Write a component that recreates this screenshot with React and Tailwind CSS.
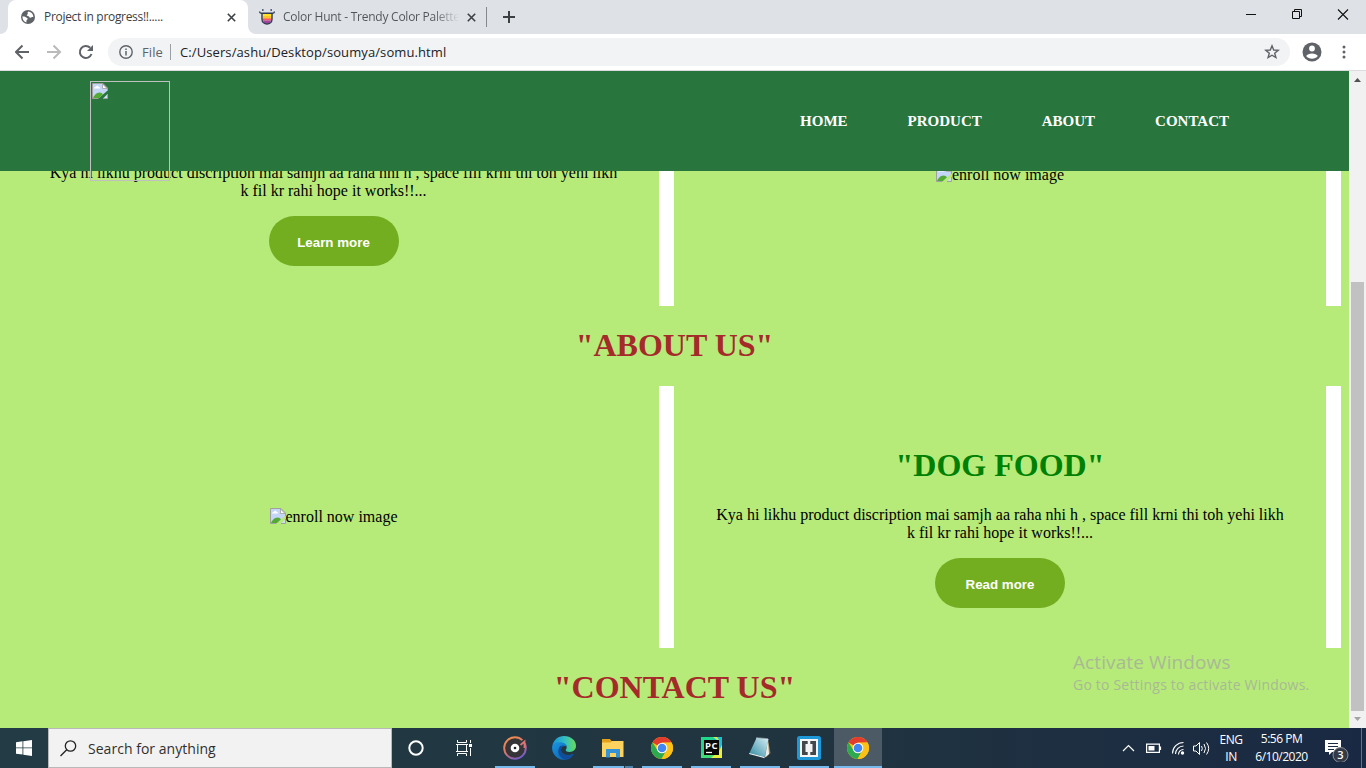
import React from "react";

const UI = "font-['Open_Sans','Noto_Sans',sans-serif]";

function GlobeIcon() {
  return (
    <svg width="14" height="14" viewBox="0 0 14 14" className="shrink-0">
      <circle cx="7" cy="7" r="7" fill="#5f6368" />
      <path d="M7.600 1.500c-1 .5-1.400 1.300-.8 2 .4.600-.4 1-.9 1.300-.5.500.1 1.200.9 1.200 1.100 0 1.300.8 1.900 1.400.5.500 1.600.2 2.300-.3l1.400-.2c-.1-2.700-2-4.900-4.800-5.400ZM1.400 6.300c1.200.2 2.500.3 3.400.9.800.600 1.800.7 1.900 1.500 0 1-1.300 1-1.300 2v1.700C3.200 12 1.300 9.600 1.400 6.300Z" fill="#fff" />
    </svg>
  );
}

function ColorHuntIcon() {
  return (
    <svg width="16" height="16" viewBox="0 0 16 16" className="shrink-0">
      <path d="M3.500 4h9v3h-9z" fill="#ffe227" />
      <path d="M3.500 7h9v3h-9z" fill="#fdc22b" />
      <path d="M3.500 9.500h9v2h-9z" fill="#f4586a" />
      <path d="M3.800 11.500h8.400L10.500 14.500h-5z" fill="#a2439b" />
      <path d="M.5 2.500q.3 1.800 2 1.800h11q1.700 0 2-1.800M3 4.300v6c0 6.200 10 6.200 10 0v-6" fill="none" stroke="#303a52" strokeWidth="1.400" />
      <path d="M3 1h1.600M11.400 1H13" stroke="#303a52" strokeWidth="1.400" />
    </svg>
  );
}

function Cross() {
  return (
    <svg width="9" height="9" viewBox="0 0 9 9" className="shrink-0">
      <path d="m.8.8 7.400 7.400M8.200.8.800 8.200" stroke="#3c4043" strokeWidth="1.600" />
    </svg>
  );
}

function TabStrip() {
  return (
    <div className={`flex h-[34px] bg-[#dee1e6] pl-2 ${UI} text-[12px] leading-[34px]`}>
      <div className="relative flex w-[240px] items-center rounded-t-lg bg-white pl-[13px]">
        <svg width="8" height="8" className="absolute bottom-0 -left-2"><path d="M8 0v8H0a8 8 0 0 0 8-8Z" fill="#fff" /></svg>
        <svg width="8" height="8" className="absolute -right-2 bottom-0"><path d="M0 0v8h8a8 8 0 0 1-8-8Z" fill="#fff" /></svg>
        <GlobeIcon />
        <span className="ml-[9px] w-[183px] whitespace-nowrap text-[#3c4043] tracking-[-0.31px]">Project in progress!!.....</span>
        <Cross />
      </div>
      <div className="flex w-[238px] items-center pl-[11px]">
        <ColorHuntIcon />
        <span className="ml-2 w-[176px] whitespace-nowrap bg-gradient-to-r from-[#505357] from-85% to-[#dee1e6] bg-clip-text text-transparent tracking-[-0.25px]">Color Hunt - Trendy Color Palette</span>
        <span className="ml-[7.500px] flex"><Cross /></span>
      </div>
      <div className="mt-[7px] h-5 w-px bg-[#85888d]" />
      <svg width="14" height="14" viewBox="0 0 14 14" className="mt-[10px] ml-[15px]">
        <path d="M7 1v12M1 7h12" stroke="#3c4043" strokeWidth="2" />
      </svg>
      <div className="ml-auto flex items-center pr-[17px]">
        <svg width="103" height="12" viewBox="0 0 103 12" fill="none" stroke="#111" className="-mt-[6px]">
          <path d="M0 6.500h10" />
          <path d="M46.500 3.500h7v7h-7zM48.500 3V1.500h7v7H54" />
          <path d="m92 1.500 10 10m0-10-10 10" strokeWidth="1.100" />
        </svg>
      </div>
    </div>
  );
}

function Toolbar() {
  return (
    <div className={`flex h-[37px] items-start border-b border-[#dadce0] bg-white pt-1 pr-[15px] pl-[15px] ${UI}`}>
      <svg width="80" height="28" viewBox="0 0 80 28" fill="none" strokeWidth="2" className="shrink-0">
        <path d="M14 14H1M7.500 7.500 1 14l6.500 6.500" stroke="#5f6368" />
        <path d="M32 14h13M38.500 7.500 45 14l-6.500 6.500" stroke="#bababd" />
        <path d="M76.500 16A6 6 0 1 1 75.200 9.800" stroke="#5f6368" />
        <path d="M78 7v6h-6z" fill="#5f6368" />
      </svg>
      <div className="ml-[13px] flex h-7 w-[1182px] items-center rounded-full bg-[#f1f3f4] pr-[10px] pl-[11px] text-[13px]">
        <svg width="14" height="14" viewBox="0 0 14 14" className="shrink-0">
          <circle cx="7" cy="7" r="6.200" fill="none" stroke="#5f6368" strokeWidth="1.400" />
          <path d="M7 6v4.500M7 3.500v1.500" stroke="#5f6368" strokeWidth="1.500" />
        </svg>
        <span className="ml-[9px] w-[28px] pt-px text-[#5f6368] tracking-[0.1px]">File</span>
        <span className="h-4 w-px bg-[#9aa0a6]" />
        <span className="ml-[9px] pt-px whitespace-nowrap text-[#202124] tracking-[0.1px]">C:/Users/ashu/Desktop/soumya/somu.html</span>
        <svg width="16" height="16" viewBox="0 0 16 16" className="ml-auto" fill="none" stroke="#5f6368" strokeWidth="1.400">
          <path d="m8 1.800 1.700 4.200 4.500.3-3.500 2.900 1.200 4.400L8 11.200l-3.900 2.400 1.200-4.400L1.800 6.300l4.500-.3Z" />
        </svg>
      </div>
      <svg width="20" height="20" viewBox="0 0 20 20" className="mt-1 ml-3 shrink-0">
        <circle cx="10" cy="10" r="9.500" fill="#5f6368" />
        <circle cx="10" cy="6.500" r="2.900" fill="#fff" />
        <path d="M4.200 14c1.600-3.400 10-3.400 11.600 0-2.600 3.600-9 3.600-11.600 0Z" fill="#fff" />
      </svg>
      <svg width="4" height="16" viewBox="0 0 4 16" className="mt-[6px] mr-[5px] ml-auto" fill="#5f6368">
        <circle cx="2" cy="3" r="1.500" /><circle cx="2" cy="8" r="1.500" /><circle cx="2" cy="13" r="1.500" />
      </svg>
    </div>
  );
}

function BrokenImage() {
  return (
    <svg width="16" height="16" viewBox="0 0 16 16" className="shrink-0">
      <path d="M1 1h10l4 4v3l-8 7H1z" fill="#c3d6f6" />
      <path d="M2 5.500C2 4 3.500 4 4 3.500c1-1.300 2.500-.5 2.700.5 1.500 0 1.800 1.500 1 1.500Z" fill="#fff" />
      <path d="M1 15c1-2.500 3.500-5.500 6.500-5.500 1.500 0 2.800 1 3.500 1.800L7 15Z" fill="#54ab33" />
      <path d="M6.500 15.500H.500V.500H11L15.500 5v3" fill="none" stroke="#a0a0a0" />
      <path d="M10.500 1v4.500H15Z" fill="#fff" stroke="#a0a0a0" strokeWidth=".8" />
      <path d="M11.500 15 15 11.500V15z" fill="#cfe0f2" /><path d="M11 15.500h4.500V11" fill="none" stroke="#a0a0a0" />
    </svg>
  );
}

function SiteHeader() {
  return (
    <header className="relative z-10 flex h-[100px] items-start bg-[#28753d] pl-[90px]">
      <div className="mt-[10px] h-[100px] w-[80px] shrink-0 border border-[#c0c0c0] pt-px pl-px">
        <BrokenImage />
      </div>
      <nav className="ml-auto flex h-[100px] items-center gap-[60px] pr-[120px] text-[15px] font-bold text-white">
        <a>HOME</a><a>PRODUCT</a><a>ABOUT</a><a>CONTACT</a>
      </nav>
    </header>
  );
}

function ProductText({ action }) {
  return (
    <div className="flex flex-col items-center px-10 pt-10 text-center">
      <h1 className="mt-[21px] text-[32px] leading-[37px] font-bold text-[#008000]">"DOG FOOD"</h1>
      <p className="mt-[22px] text-[16px] leading-[18px] whitespace-nowrap text-black">
        Kya hi likhu product discription mai samjh aa raha nhi h , space fill krni thi toh yehi likh
        <br />k fil kr rahi hope it works!!...
      </p>
      <button className="mt-4 h-[50px] w-[130px] rounded-[25px] bg-[#73ae20] pt-1 font-['Liberation_Sans',sans-serif] text-[13.333px] font-bold text-white">{action}</button>
    </div>
  );
}

function EnrollImage() {
  return (
    <div className="flex items-center justify-center text-[16px] leading-[18px] text-black">
      <span className="-mt-[2px]"><BrokenImage /></span>
      <span>enroll now image</span>
    </div>
  );
}

function Row({ left, right, className = "" }) {
  return (
    <section className={`grid h-[262px] grid-cols-[666px_667px] pl-2 ${className}`}>
      <div className="grid border-r-[15px] border-white">{left}</div>
      <div className="grid border-r-[15px] border-white">{right}</div>
    </section>
  );
}

function SectionTitle({ children }) {
  return <h1 className="flex h-20 items-center justify-center pb-[2px] text-[32px] font-bold text-[#a52a2a]">{children}</h1>;
}

function Page() {
  return (
    <div className="flex h-[657px] overflow-hidden">
      <main className="relative w-[1349px] overflow-hidden bg-[#b6eb7a] font-['Liberation_Serif',serif]">
        <SiteHeader />
        <Row className="-mt-[127px]" left={<ProductText action="Learn more" />} right={<EnrollImage />} />
        <SectionTitle>"ABOUT US"</SectionTitle>
        <Row left={<EnrollImage />} right={<ProductText action="Read more" />} />
        <SectionTitle>"CONTACT US"</SectionTitle>
        <div className={`absolute top-[579px] left-[1073px] whitespace-nowrap text-[#a9b994] ${UI}`}>
          <div className="text-[19px] leading-6 tracking-[0.1px]">Activate Windows</div>
          <div className="text-[14px] leading-[22px] tracking-[0.2px]">Go to Settings to activate Windows.</div>
        </div>
      </main>
      <div className="flex w-[17px] flex-col items-center bg-[#f1f1f1]">
        <svg width="17" height="17"><path d="M5 11h7L8.500 7Z" fill="#505050" /></svg>
        <div className="mt-[194px] h-[429px] w-[13px] bg-[#c1c1c1]" />
        <svg width="17" height="17"><path d="M5 6h7l-3.500 4Z" fill="#a3a3a3" /></svg>
      </div>
    </div>
  );
}

function Chrome() {
  return (
    <svg width="24" height="24" viewBox="0 0 24 24">
      <circle cx="12" cy="12" r="11" fill="#fbc116" />
      <path d="M12 12 2.470 6.500A11 11 0 0 1 21.530 6.500L12 7Z" fill="#e33b2e" />
      <path d="M2.470 6.500A11 11 0 0 0 11.500 23l5-8.500-4.500 2.500a5 5 0 0 1-4.300-2.500Z" fill="#2da94f" />
      <path d="M21.530 6.500H12v5l4.300 3-4.800 8.500A11 11 0 0 0 21.530 6.500Z" fill="#fbc116" />
      <circle cx="12" cy="12" r="5.300" fill="#fff" />
      <circle cx="12" cy="12" r="4.300" fill="#4285f4" />
    </svg>
  );
}

function Groove() {
  return (
    <svg width="24" height="24" viewBox="0 0 24 24">
      <defs>
        <linearGradient id="groove" x1="0" y1="0" x2=".6" y2="1"><stop stopColor="#f59348" /><stop offset=".5" stopColor="#dc7868" /><stop offset="1" stopColor="#7a5cc4" /></linearGradient>
      </defs>
      <circle cx="12" cy="12" r="10.800" fill="#353537" stroke="url(#groove)" strokeWidth="1.900" />
      <path d="M18 8.500 22.500 4" stroke="#253943" strokeWidth="4" />
      <path d="m17.500 9 4-3.500V12" fill="none" stroke="#dc7474" strokeWidth="1.800" />
      <circle cx="12" cy="12" r="4.300" fill="#fff" /><circle cx="12" cy="12" r="1.300" fill="#222" />
    </svg>
  );
}

function Edge() {
  return (
    <svg width="24" height="24" viewBox="0 0 24 24">
      <defs>
        <linearGradient id="edgeTop" x1="0" x2="1"><stop stopColor="#1692d8" /><stop offset=".55" stopColor="#35c1c1" /><stop offset="1" stopColor="#66dc58" /></linearGradient>
        <linearGradient id="edgeLow" x1="0" y1="0" x2="1" y2="1"><stop stopColor="#1a96e2" /><stop offset="1" stopColor="#0c59a4" /></linearGradient>
      </defs>
      <path d="M.3 10C1.300 4 6 0 12 0c7 0 12 4.500 12 9.800 0 4-3 6.200-6.300 6.200-2.700 0-4-1-4-2 0-.7 1-1.200 1-3 0-2.500-3-4-6.200-4C5 7 2 8.300.3 10Z" fill="url(#edgeTop)" />
      <path d="M.3 10C2.500 6 9 5 12.500 7.500c1.400 1 2 2.200 2 3.500-.6-1.500-5-1.500-5.500 2.500-.4 4 5 7.500 12.700 4.500C18.500 24 11 25.500 5.500 22 1 19-.5 14 .3 10Z" fill="url(#edgeLow)" />
      <path d="M7 12c-2.500 5.500 1.500 10.500 6.500 11.500 3 0 6-1.500 8.200-5.500-7 3-13.500-.5-12.700-4.500.3-2 1.500-3.300 3.200-3.700C10 9.300 8 9.800 7 12Z" fill="#104e9b" />
    </svg>
  );
}

function Explorer() {
  return (
    <svg width="24" height="24" viewBox="0 0 24 24">
      <path d="M1 3h8l1.500 2H22v5H1z" fill="#e5a01b" />
      <path d="M1 6.500h8.500L11 5h11.500v16H1z" fill="#fcd35e" />
      <path d="M5 20.500V13h14v8.500h-4V17H9v4.500H5z" fill="#3492d6" />
    </svg>
  );
}

function PyCharm() {
  return (
    <svg width="24" height="24" viewBox="0 0 24 24" className="ml-px">
      <path d="M1 1h21v21H1z" fill="#21d789" />
      <path d="M13 1h9v13l-7-5z" fill="#16c2da" />
      <path d="m22 9-4 8-9 5h13z" fill="#eaf03f" /><path d="M1 17v5h10l3-3z" fill="#3fdc78" /><path d="m13 1 4 3h2l-2-3z" fill="#d8ec4a" />
      <path d="M4 4h15v15H4z" fill="#080808" />
      <text x="5" y="12.500" fill="#fff" fontFamily="Open Sans" fontWeight="700" fontSize="9.500" textLength="12.500">PC</text>
      <path d="M6 16.500h6" stroke="#fff" strokeWidth="1.300" />
    </svg>
  );
}

function Notepad() {
  return (
    <svg width="24" height="24" viewBox="0 0 24 24">
      <defs>
        <linearGradient id="pad" x1="1" y1="0" x2="0" y2="1"><stop stopColor="#d5eef2" /><stop offset=".5" stopColor="#83bccb" /><stop offset="1" stopColor="#2d8ba1" /></linearGradient>
      </defs>
      <path d="m20 4 2.500 13-4 4-2-1z" fill="#9c7740" />
      <path d="m20 4 1 14-4 3.500z" fill="#e9eceb" />
      <path d="M8.500 2 20.500 3l-3.800 18L1.500 17z" fill="url(#pad)" />
      <path d="m1.500 17 15.200 4-.3 1.200L1 18z" fill="#e8f5f7" />
      <path d="m8.500 2 12 1" stroke="#d8e4e7" strokeWidth="1.500" strokeDasharray="1 1" />
    </svg>
  );
}

function Brackets() {
  return (
    <svg width="24" height="24" viewBox="0 0 24 24">
      <rect width="24" height="24" rx="2.500" fill="#1d98d8" /><path d="M3 3h18v18H3z" fill="#f4f4f4" />
      <path d="M10.700 5H5v14h5.700v-3H8.500V8h2.200zM13.300 5H19v14h-5.700v-3h2.200V8h-2.200z" fill="#42484b" />
    </svg>
  );
}

const apps = [
  { icon: Groove }, { icon: Edge, idle: true }, { icon: Explorer, stacked: true }, { icon: Chrome },
  { icon: PyCharm }, { icon: Notepad }, { icon: Brackets }, { icon: Chrome, active: true },
];

function AppButton({ icon: Icon, idle, stacked, active }) {
  return (
    <div className={`flex h-10 w-12 flex-col items-center pt-2 ${active ? "bg-[#4c5a66]" : ""}`}>
      <Icon />
      <div className={`mt-[6px] flex h-[2px] gap-px ${active ? "w-12" : "w-10"}`}>
        {!idle && <div className="flex-1 bg-[#76b9ed]" />}
        {stacked && <div className="w-2 bg-[#4e83ad]" />}
      </div>
    </div>
  );
}

function Taskbar() {
  return (
    <footer className={`flex h-10 bg-gradient-to-r from-[#223b44] via-[#20343f] via-60% to-[#1a2943] text-white ${UI}`}>
      <div className="flex w-12 items-center justify-center">
        <svg width="16" height="16" viewBox="0 0 16 16" fill="#fff"><path d="M0 2.200 6.500 1.300v6.200H0zM7.300 1.200 16 0v7.500H7.300zM0 8.300h6.500v6.300L0 13.700zM7.300 8.300H16V16l-8.700-1.200z" /></svg>
      </div>
      <div className="flex w-[344px] items-center border border-[#b9b9b9] bg-[#f2f2f2] pl-[11px] text-[14px] text-[#303030]">
        <svg width="17" height="17" viewBox="0 0 17 17" fill="none" stroke="#222" strokeWidth="1.300"><circle cx="10.500" cy="6" r="5.200" /><path d="M6.700 9.800.5 16" /></svg>
        <span className="ml-[11px] whitespace-nowrap tracking-[0.03px]">Search for anything</span>
      </div>
      <div className="flex w-12 items-center justify-center">
        <svg width="16" height="16"><circle cx="8" cy="8" r="6.700" fill="none" stroke="#fff" strokeWidth="2" /></svg>
      </div>
      <div className="flex w-12 items-center justify-center">
        <svg width="17" height="16" viewBox="0 0 17 16" fill="none" stroke="#fff"><path d="M1.500 0v2.500h9V0M0 4.500h12M1.500 4.500v7M10.500 4.500v7M0 11.500h12M1.500 16v-2.500h9V16M14.500 0v3M14.500 8v8" /><path d="M13 4h3v3h-3z" fill="#fff" stroke="none" /></svg>
      </div>
      <div className="ml-[3px] flex gap-px">{apps.map((app, i) => <AppButton key={i} {...app} />)}</div>
      <div className="ml-auto flex items-center">
        <svg width="90" height="20" viewBox="0 0 90 20" fill="none" stroke="#fff" strokeWidth="1.200">
          <path d="m2 13 5.500-5.500L13 13" />
          <path d="M25.600 6.100h12.800v8.300H25.600zM39.500 8.500v3.500" />
          <path d="M27.500 8h6v4.500h-6z" fill="#fff" stroke="none" />
          <path d="M51.500 15.500A11 11 0 0 1 62.500 4.500M54.500 16a8 8 0 0 1 8-8M57.500 16.500a5 5 0 0 1 5-5" strokeWidth="1.100" /><circle cx="61.500" cy="15" r="1.700" fill="#fff" stroke="none" />
          <path d="M72.500 8h2.500l3.500-3.500v12L75 13h-2.500z" strokeWidth="1" /><path d="M80.500 8q1.600 2.500 0 5M83 6q3 4.500 0 9M85.500 4.500q4.400 6 0 12" strokeWidth="1" />
        </svg>
        <div className="flex w-10 flex-col items-center text-[12px] leading-[17px] tracking-[-0.45px]"><span>ENG</span><span>IN</span></div>
        <div className="ml-[2px] flex w-[57px] flex-col items-center text-[12px] leading-[18px] tracking-[-0.5px] whitespace-nowrap"><span>5:56 PM</span><span>6/10/2020</span></div>
        <svg width="26" height="28" viewBox="0 0 26 28" className="ml-[14px]">
          <path d="M1 6h16v12H8l-3 3v-3H1z" fill="#fff" /><path d="M4 9.500h10M4 12.500h10M4 15.500h6" stroke="#1c2b42" />
          <circle cx="16.500" cy="21" r="7.500" fill="#343b46" stroke="#8b9199" />
          <text x="16.500" y="25" textAnchor="middle" fill="#fff" fontFamily="Open Sans" fontWeight="600" fontSize="11">3</text>
        </svg>
        <div className="mr-1 ml-[11px] h-10 w-px bg-[#68727f]" />
      </div>
    </footer>
  );
}

export default function App() {
  return (
    <div className="h-[768px] w-[1366px] overflow-hidden bg-white">
      <TabStrip />
      <Toolbar />
      <Page />
      <Taskbar />
    </div>
  );
}
